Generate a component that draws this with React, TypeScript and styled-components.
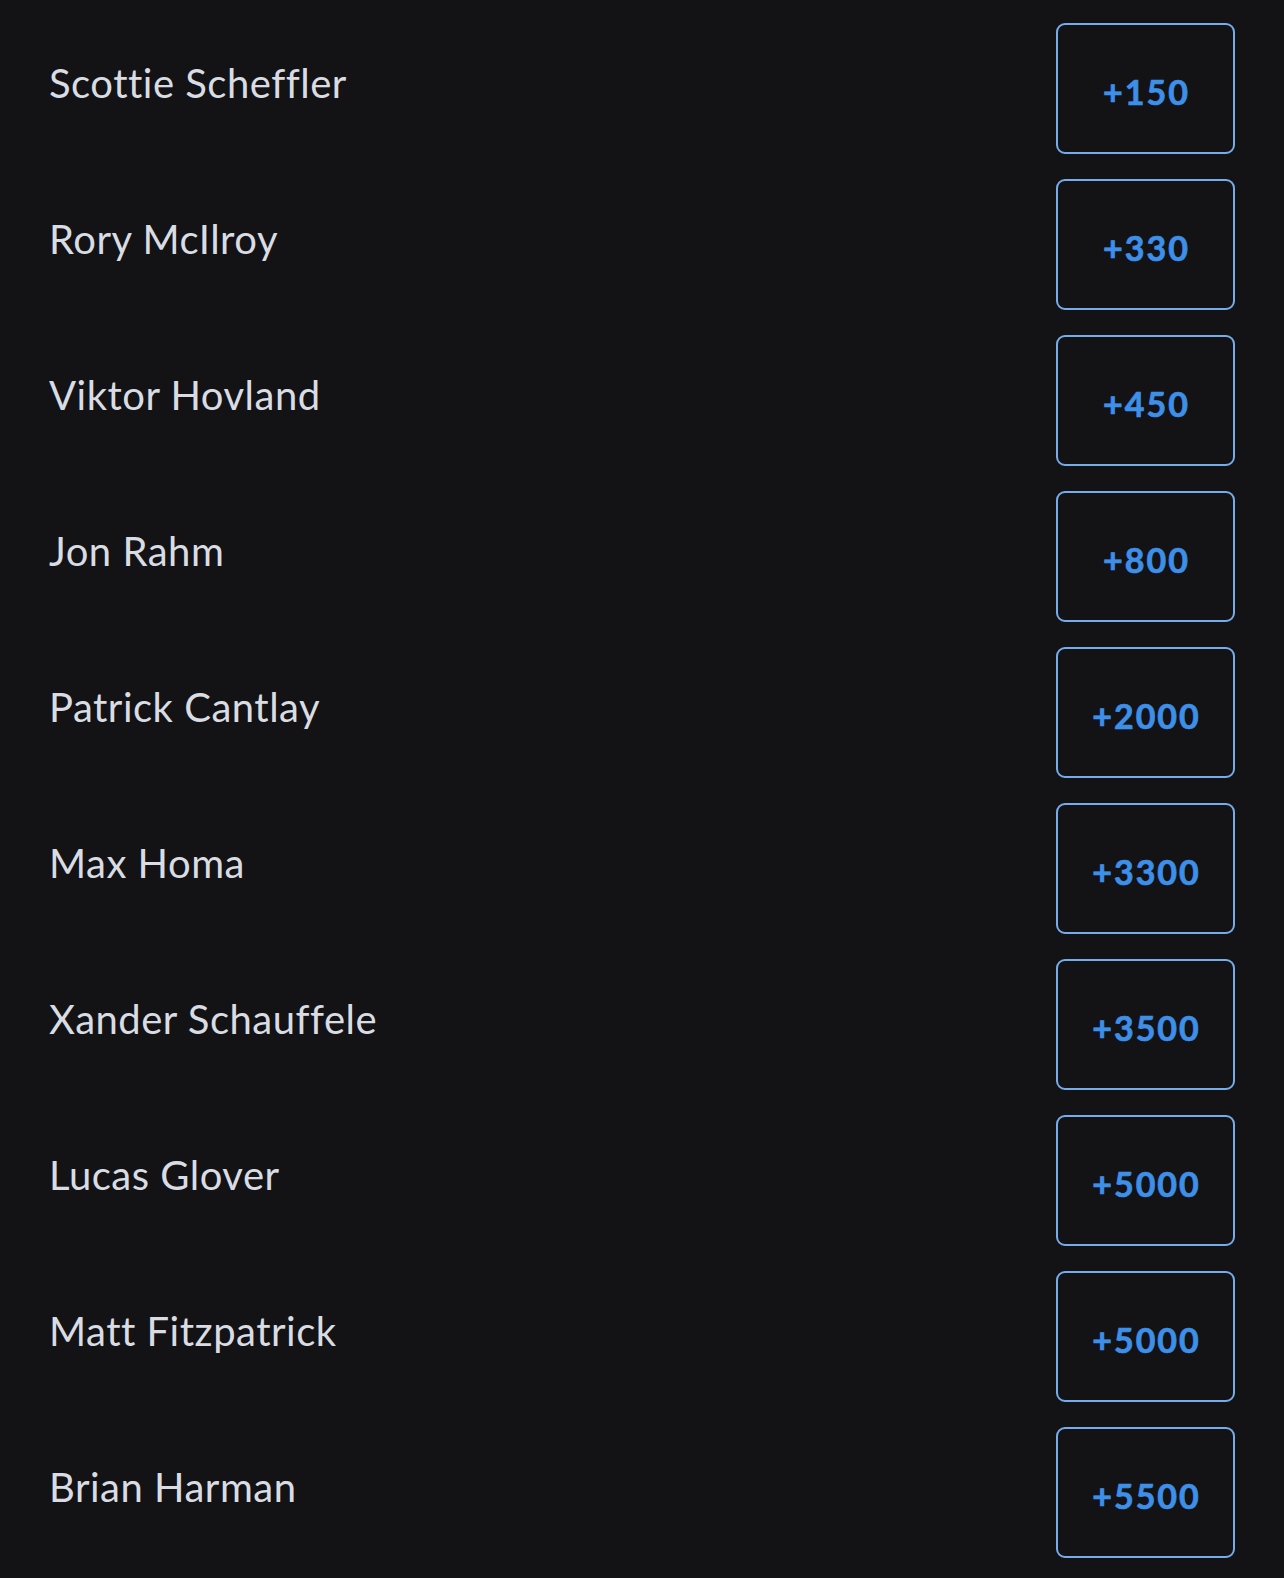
import styled, { createGlobalStyle } from 'styled-components'

const players = [
    { name: 'Scottie Scheffler', odds: '+150' },
    { name: 'Rory McIlroy', odds: '+330' },
    { name: 'Viktor Hovland', odds: '+450' },
    { name: 'Jon Rahm', odds: '+800' },
    { name: 'Patrick Cantlay', odds: '+2000' },
    { name: 'Max Homa', odds: '+3300' },
    { name: 'Xander Schauffele', odds: '+3500' },
    { name: 'Lucas Glover', odds: '+5000' },
    { name: 'Matt Fitzpatrick', odds: '+5000' },
    { name: 'Brian Harman', odds: '+5500' },
]

const App = () => {
    return (
        <>
            <GlobalStyle />
            <List>
                {players.map((p) => (
                    <Row key={p.name}>
                        <Name>{p.name}</Name>
                        <OddsButton>{p.odds}</OddsButton>
                    </Row>
                ))}
            </List>
        </>
    )
}

export default App

const GlobalStyle = createGlobalStyle`
html, body {
    margin: 0;
    padding: 0;
    background: #131316;
}
body {
    font-family: Lato, "Open Sans", sans-serif;
    font-variant-ligatures: none;
}
`

const List = styled.div`
display: flex;
flex-direction: column;
gap: 25px;
padding: 23px 49px 22px 49px;
min-height: 1578px;
box-sizing: border-box;
background: #131316;
`

const Row = styled.div`
display: flex;
align-items: center;
justify-content: space-between;
height: 131px;
`

const Name = styled.div`
font-size: 40px;
letter-spacing: 0.5px;
color: #d9dde3;
padding-bottom: 11px;
font-variant-ligatures: none;
`

const OddsButton = styled.button`
width: 179px;
height: 131px;
box-sizing: border-box;
border: 2px solid #76ace9;
border-radius: 9px;
background: transparent;
color: #3d8fe8;
font-family: Lato, "Open Sans", sans-serif;
font-weight: 700;
font-size: 34px;
letter-spacing: 2px;
-webkit-text-stroke: 0.7px #3d8fe8;
padding: 5px 0 0 2px;
cursor: pointer;
`
